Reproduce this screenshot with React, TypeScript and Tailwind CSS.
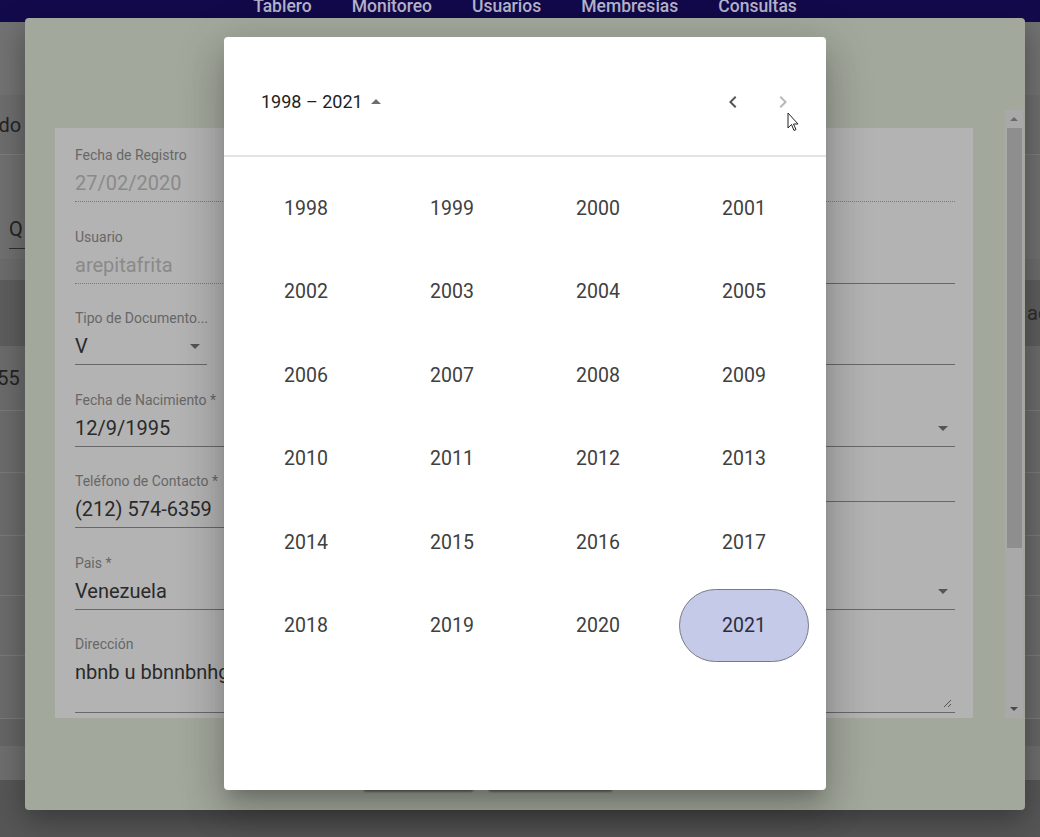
import type { ReactNode } from "react";

const NAV = ["Tablero", "Monitoreo", "Usuarios", "Membresias", "Consultas"];

const YEARS = Array.from({ length: 24 }, (_, i) => 1998 + i);

function DropArrow({ className = "" }: { className?: string }) {
  return (
    <svg viewBox="0 0 24 24" width={24} height={24} className={className}>
      <path d="M7 10l5 5 5-5z" fill="#555" />
    </svg>
  );
}

type FieldProps = {
  label: string;
  value?: string;
  muted?: boolean;
  dotted?: boolean;
  select?: boolean;
  className?: string;
  children?: ReactNode;
};

function Field({ label, value = "", muted, dotted, select, className = "", children }: FieldProps) {
  return (
    <div className={"flex flex-col " + className}>
      <span className="whitespace-nowrap text-[14px] leading-[16px] text-[#676767]">{label}</span>
      <div
        className={
          "mt-[7px] flex items-center justify-between pb-[5px] " +
          (dotted ? "border-b border-dotted border-[#7a7a7a]" : "border-b border-[#686868]")
        }
      >
        <span
          className={
            "whitespace-nowrap text-[20px] leading-[26px] " + (muted ? "text-[#8a8a8a]" : "text-[#2a2a2a]")
          }
        >
          {value}
        </span>
        {select && <DropArrow className="shrink-0" />}
      </div>
      {children}
    </div>
  );
}

function BackgroundPage() {
  return (
    <div className="flex h-full flex-col">
      <nav className="flex h-[22px] shrink-0 items-start justify-center gap-[40px] bg-[#130a4c] pl-[10px]">
        {NAV.map((n) => (
          <span key={n} className="-mt-[2px] text-[17.5px] font-medium leading-[17px] text-[#b9b7cc]">
            {n}
          </span>
        ))}
      </nav>
      <div className="h-[73px] shrink-0 bg-[#727272]" />
      <div className="-mx-[45px] flex flex-col text-[20px] text-[#242424]">
        <div className="flex h-[60px] items-center border-b border-[#7c7c7c] bg-[#6d6d6d]">
          <span>Listado</span>
        </div>
        <div className="flex h-[105px] items-end border-b border-[#6a6a6a] bg-[#707070] pb-[10px]">
          <div className="ml-[54px] border-b border-[#303030] pb-[4px] pr-[6px]">Q</div>
        </div>
        <div className="flex h-[20px] bg-[#6c6c6c]" />
        <div className="flex h-[66px] items-center bg-[#5d5d5d] text-[#2c2c2c]">
          <span className="ml-auto w-[58px] overflow-hidden whitespace-nowrap">acciones</span>
        </div>
        <div className="flex h-[65px] items-center border-b border-[#7a7a7a] bg-[#6b6b6b]">
          <span className="ml-[-14px]">0424555</span>
        </div>
        {[62, 63, 60, 60, 63].map((h, i) => (
          <div key={i} style={{ height: h }} className="border-b border-[#7a7a7a] bg-[#6b6b6b]" />
        ))}
        <div className="h-[27px] bg-[#656565]" />
        <div className="h-[35px] border-b border-[#555] bg-[#6e6e6e]" />
      </div>
      <div className="flex-1 bg-[#565656]" />
    </div>
  );
}

function FormDialog() {
  return (
    <div className="absolute left-[25px] top-[18px] flex h-[792px] w-[1000px] flex-col rounded-[4px] bg-[#a3a89c] shadow-[0_10px_30px_rgba(0,0,0,0.35)]">
      <div className="h-[92px] shrink-0" />
      <div className="flex h-[608px] shrink-0 overflow-hidden">
        <div className="flex-1 overflow-hidden pl-[30px] pt-[18px]">
          <div className="w-[918px] bg-[#b3b3b3] pl-[20px] pr-[18px] pt-[19px] pb-[40px]">
            <div className="grid grid-cols-2 gap-x-[20px] gap-y-[26.5px]">
              <Field className="col-span-2" label="Fecha de Registro" value="27/02/2020" muted dotted />
              <Field label="Usuario" value="arepitafrita" muted dotted />
              <Field label="Correo Electrónico *" value="arepita@gmail.com" />
              <div className="flex gap-[20px]">
                <Field className="w-[132px] shrink-0" label="Tipo de Documento..." value="V" select />
                <Field className="flex-1" label="Número de Documento *" value="24567123" />
              </div>
              <Field label="Nombre y Apellido *" value="Arepita Frita" />
              <Field label="Fecha de Nacimiento *" value="12/9/1995" />
              <Field label="Género *" value="Femenino" select />
              <Field label="Teléfono de Contacto *" value="(212) 574-6359" />
              <Field label="Teléfono Secundario" value="" />
              <Field label="Pais *" value="Venezuela" select />
              <Field label="Estado *" value="Distrito Capital" select />
              <div className="col-span-2 flex flex-col">
                <span className="text-[14px] leading-[16px] text-[#676767]">Dirección</span>
                <div className="relative mt-[7px] h-[54px] border-b border-[#686868]">
                  <span className="text-[20px] leading-[26px] text-[#2a2a2a]">nbnb u bbnnbnhgh caracas</span>
                  <svg className="absolute bottom-[4px] right-[3px]" width="10" height="10" viewBox="0 0 10 10">
                    <path d="M9 2L2 9M9 6L6 9" stroke="#555" strokeWidth="1" />
                  </svg>
                </div>
              </div>
            </div>
          </div>
        </div>
        <div className="mr-[2px] flex w-[18px] flex-col items-center bg-[#a9a9a9]">
          <svg width="10" height="18" viewBox="0 0 10 18">
            <path d="M1 11l4-4 4 4z" fill="#6a6a6a" />
          </svg>
          <div className="h-[420px] w-[15px] bg-[#8e8e8e]" />
          <div className="flex-1" />
          <svg width="10" height="18" viewBox="0 0 10 18">
            <path d="M1 7l4 4 4-4z" fill="#4a4a4a" />
          </svg>
        </div>
      </div>
      <div className="flex flex-1 items-end gap-[14px] pb-[20px] pl-[338px]">
        <div className="h-[36px] w-[111px] rounded-[4px] bg-[#a6aaa0] shadow-[0_2px_2px_rgba(0,0,0,0.35)]" />
        <div className="h-[36px] w-[125px] rounded-[4px] bg-[#a6aaa0] shadow-[0_2px_2px_rgba(0,0,0,0.35)]" />
      </div>
    </div>
  );
}

function YearPicker() {
  return (
    <div className="absolute left-[224px] top-[37px] flex h-[753px] w-[602px] flex-col rounded-[4px] bg-white shadow-[0_11px_15px_-7px_rgba(0,0,0,0.2),0_24px_38px_3px_rgba(0,0,0,0.14),0_9px_46px_8px_rgba(0,0,0,0.12)]">
      <div className="flex h-[120px] shrink-0 items-start justify-between border-b-2 border-[#e3e3e3] pl-[37px] pr-[31px] pt-[53px]">
        <div className="flex h-[24px] items-center">
          <span className="text-[18px] leading-[24px] text-[#222]">1998 – 2021</span>
          <svg viewBox="0 0 24 24" width={24} height={24} className="ml-[1px]">
            <path d="M7 14l5-5 5 5z" fill="#6e6e6e" />
          </svg>
        </div>
        <div className="flex h-[24px] items-center gap-[26px]">
          <svg viewBox="0 0 24 24" width={24} height={24}>
            <path d="M15.41 7.41L14 6l-6 6 6 6 1.41-1.41L10.83 12z" fill="#555" />
          </svg>
          <svg viewBox="0 0 24 24" width={24} height={24}>
            <path d="M10 6L8.59 7.41 13.17 12l-4.58 4.59L10 18l6-6z" fill="#b8b8b8" />
          </svg>
        </div>
      </div>
      <div className="grid auto-rows-[83.4px] grid-cols-4 px-[9px] pt-[10px]">
        {YEARS.map((y) => (
          <div key={y} className="flex items-center justify-center">
            {y === 2021 ? (
              <span className="flex h-[73px] w-[130px] items-center justify-center rounded-full border border-[#7a7a86] bg-[#c5cae9] text-[19.5px] text-[#2c2c3c]">
                {y}
              </span>
            ) : (
              <span className="text-[19.5px] text-[#404040]">{y}</span>
            )}
          </div>
        ))}
      </div>
    </div>
  );
}

export default function App() {
  return (
    <div className="relative h-[837px] w-[1040px] overflow-hidden bg-[#6b6b6b] font-['Roboto',sans-serif]">
      <BackgroundPage />
      <FormDialog />
      <YearPicker />
      <svg className="absolute left-[787px] top-[112px]" width="13" height="21" viewBox="0 0 13 21">
        <path d="M1 1v15l3.5-3.5 2.5 6 2-1-2.5-5.5H11z" fill="white" stroke="#222" strokeWidth="1" strokeLinejoin="round" />
      </svg>
    </div>
  );
}
